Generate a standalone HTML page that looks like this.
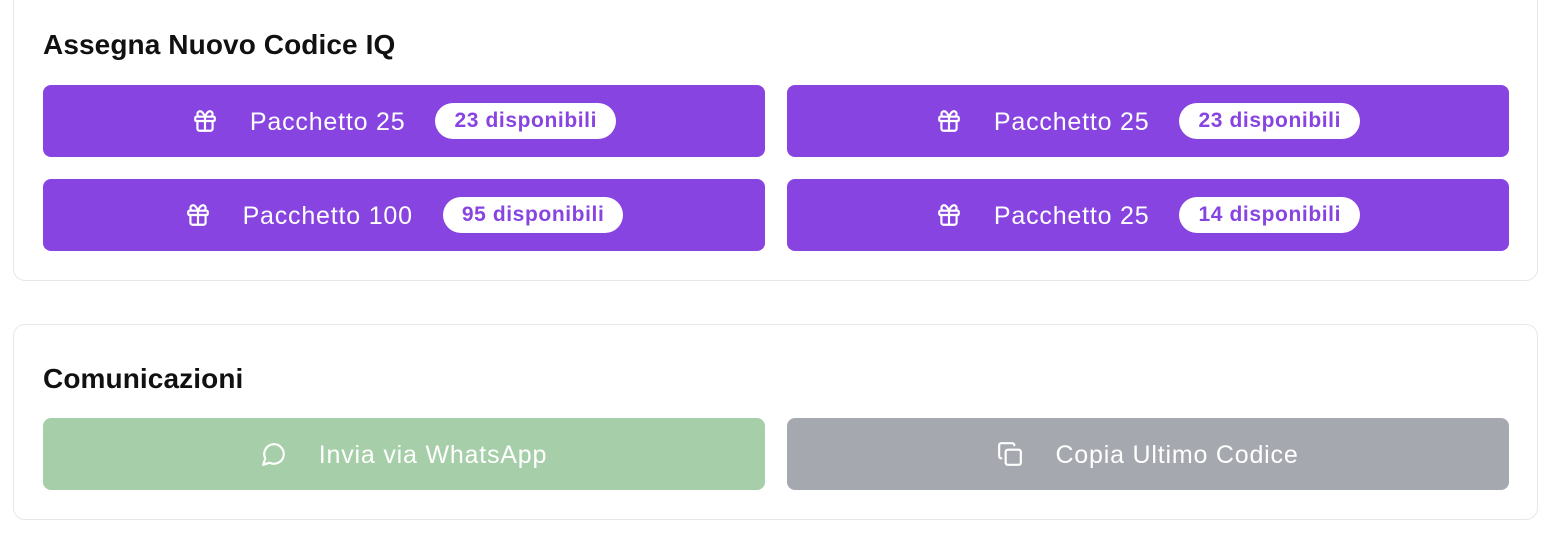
<!DOCTYPE html>
<html><head><style>
body{margin:0;width:1566px;height:534px;background:#fff;font-family:"Liberation Sans",sans-serif;position:relative;overflow:hidden}
.card{position:absolute;left:13px;width:1523px;border:1px solid #e5e7eb;border-radius:12px;background:#fff}
h2{position:absolute;left:29px;margin:0;font-size:28px;font-weight:600;color:#111;letter-spacing:0.1px}
.btn{position:absolute;width:722px;height:72px;border-radius:8px;display:flex;align-items:center;justify-content:center;color:#fff;font-size:25px;letter-spacing:0.8px;padding-top:2px;box-sizing:border-box}
.p{background:#8744e1}
.btn svg{width:26px;height:26px;margin-right:32px;margin-top:-2px;fill:none;stroke:#fff;stroke-width:2;stroke-linecap:round;stroke-linejoin:round}
.badge{background:#fff;color:#8744e1;font-weight:700;font-size:21px;letter-spacing:0.6px;border-radius:18px;height:36px;padding:0 19px;display:flex;align-items:center;margin-left:30px;margin-top:-2px}
</style></head><body>
<div class="card" style="top:-12px;height:291px">
<h2 style="top:40px">Assegna Nuovo Codice IQ</h2>
</div>
<div class="card" style="top:324px;height:194px">
<h2 style="top:38px">Comunicazioni</h2>
</div>
<svg width="0" height="0" style="position:absolute"><defs><symbol id="g" viewBox="0 0 24 24"><rect x="3" y="8" width="18" height="4" rx="1"/><path d="M12 8v13M19 12v7a2 2 0 0 1-2 2H7a2 2 0 0 1-2-2v-7M7.5 8a2.5 2.5 0 0 1 0-5C10 3 12 8 12 8s2-5 4.5-5a2.5 2.5 0 0 1 0 5"/></symbol></defs></svg>
<div class="btn p" style="left:43px;top:85px"><svg><use href="#g"/></svg>Pacchetto 25<span class="badge">23 disponibili</span></div>
<div class="btn p" style="left:787px;top:85px"><svg><use href="#g"/></svg>Pacchetto 25<span class="badge">23 disponibili</span></div>
<div class="btn p" style="left:43px;top:179px"><svg><use href="#g"/></svg>Pacchetto 100<span class="badge">95 disponibili</span></div>
<div class="btn p" style="left:787px;top:179px"><svg><use href="#g"/></svg>Pacchetto 25<span class="badge">14 disponibili</span></div>
<div class="btn" style="left:43px;top:418px;background:#a6cea9"><svg viewBox="0 0 24 24"><path d="M7.9 20A9 9 0 1 0 4 16.1L2 22Z"/></svg>Invia via WhatsApp</div>
<div class="btn" style="left:787px;top:418px;background:#a6a8af"><svg viewBox="0 0 24 24"><rect x="8" y="8" width="14" height="14" rx="2"/><path d="M4 16c-1.1 0-2-.9-2-2V4c0-1.1.9-2 2-2h10c1.1 0 2 .9 2 2"/></svg>Copia Ultimo Codice</div>
</body></html>
